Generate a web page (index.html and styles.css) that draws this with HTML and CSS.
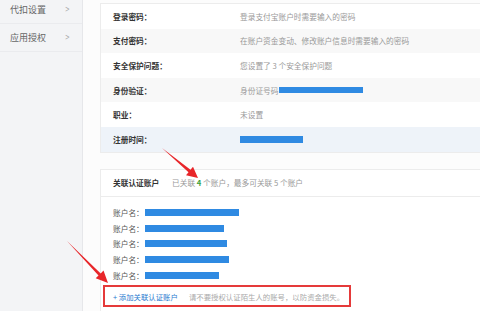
FILE: index.html
```html
<!DOCTYPE html>
<html lang="zh-CN">
<head>
    <meta charset="UTF-8">
    <title>账户设置</title>
    <link rel="stylesheet" href="styles.css">
</head>
<body>
    <div class="page">
        <aside class="side">
            <a class="side-item first">代扣设置<span class="chev">&gt;</span></a>
            <a class="side-item">应用授权<span class="chev">&gt;</span></a>
        </aside>

        <main class="main">
            <section class="card info">
                <div class="row"><span class="label">登录密码：</span><span class="value">登录支付宝账户时需要输入的密码</span></div>
                <div class="row alt"><span class="label">支付密码：</span><span class="value">在账户资金变动、修改账户信息时需要输入的密码</span></div>
                <div class="row"><span class="label">安全保护问题：</span><span class="value">您设置了 3 个安全保护问题</span></div>
                <div class="row alt"><span class="label">身份验证：</span><span class="value">身份证号码<span class="mask id-mask"></span></span></div>
                <div class="row"><span class="label">职业：</span><span class="value">未设置</span></div>
                <div class="row hl"><span class="label">注册时间：</span><span class="value"><span class="mask date-mask"></span></span></div>
            </section>

            <section class="card linked">
                <div class="linked-head">
                    <span class="title">关联认证账户</span>
                    <span class="summary">已关联 <b class="num">4</b> 个账户，最多可关联 5 个账户</span>
                </div>
                <div class="linked-body">
                    <div class="acct">账户名：<span class="mask" style="width: 94px;"></span></div>
                    <div class="acct">账户名：<span class="mask" style="width: 79px;"></span></div>
                    <div class="acct">账户名：<span class="mask" style="width: 82px;"></span></div>
                    <div class="acct">账户名：<span class="mask" style="width: 84px;"></span></div>
                    <div class="acct">账户名：<span class="mask" style="width: 74px;"></span></div>
                    <div class="add-box">
                        <a class="add">+ 添加关联认证账户</a>
                        <span class="tip">请不要授权认证陌生人的账号，以防资金损失。</span>
                    </div>
                </div>
            </section>
        </main>

        <!-- 标注箭头 -->
        <svg class="marks" width="480" height="311" viewBox="0 0 480 311">
            <polygon points="162,148 190.5,169.8 193,166.8 198,178 186,175.2 188.5,172.2" fill="#e8262a"/>
            <polygon points="67,241 100.7,273.4 103.5,270.6 108,283 95.7,278.2 98.5,275.4" fill="#e8262a"/>
        </svg>
    </div>
</body>
</html>
```

FILE: styles.css
```css
body {
    margin: 0;
    font-family: "Noto Sans CJK SC", "Noto Sans", sans-serif;
    background-color: #fcfcfc;
    overflow: hidden;
}

.page {
    position: relative;
    display: flex;
    width: 480px;
    height: 311px;
    overflow: hidden;
}

/* 左侧菜单 */
.side {
    width: 82px;
    flex-shrink: 0;
    background-color: #f3f4f6;
    border-right: 1px solid #e6e7ea;
}

.side-item {
    display: flex;
    align-items: center;
    justify-content: space-between;
    height: 28px;
    padding: 0 10px;
    font-size: 9px;
    color: #666;
    border-bottom: 1px solid #eaebee;
    box-sizing: border-box;
}

.side-item.first {
    margin-top: -4px;
}

.chev {
    color: #aaa;
    font-family: "DejaVu Sans", sans-serif;
    font-size: 8px;
    transform: scaleX(0.7);
    margin-right: 1px;
}

/* 主区域 */
.main {
    flex: 1;
    padding: 3px 0 0 17px;
}

.card {
    background-color: #fff;
    border: 1px solid #ececec;
    border-right: none;
}

.row {
    display: flex;
    align-items: center;
    height: 24.6px;
    padding-left: 12px;
    font-size: 7.7px;
}

.row.alt {
    background-color: #f8f8f8;
}

.row.hl {
    background-color: #eef3f9;
}

.label {
    width: 127px;
    color: #333;
    font-weight: bold;
}

.value {
    display: flex;
    align-items: center;
    color: #999;
}

.mask {
    display: inline-block;
    height: 7px;
    background-color: #2f8ae2;
}

.id-mask {
    width: 84px;
    height: 6px;
    margin-left: 1px;
}

.date-mask {
    width: 63px;
}

.linked {
    margin-top: 16px;
    height: 200px;
}

.linked-head {
    display: flex;
    align-items: center;
    height: 26px;
    padding-left: 12px;
    font-size: 7.7px;
    border-bottom: 1px solid #ececec;
}

.title {
    width: 59px;
    color: #333;
    font-weight: bold;
}

.summary {
    color: #999;
}

.num {
    color: #3aa03a;
}

.linked-body {
    padding-top: 8px;
}

.acct {
    display: flex;
    align-items: center;
    height: 15.75px;
    padding-left: 12px;
    font-size: 7.7px;
    color: #555;
}

.acct .mask {
    margin-left: 1px;
}

.add-box {
    display: flex;
    align-items: center;
    width: 248px;
    height: 22px;
    margin: 2px 0 0 2px;
    padding-left: 8px;
    border: 2px solid #e53a3a;
    box-sizing: border-box;
    font-size: 7.4px;
    white-space: nowrap;
}

.add {
    color: #2a7bd0;
    margin-right: 11px;
}

.tip {
    color: #aaa;
}

.marks {
    position: absolute;
    top: 0;
    left: 0;
    pointer-events: none;
}
```
